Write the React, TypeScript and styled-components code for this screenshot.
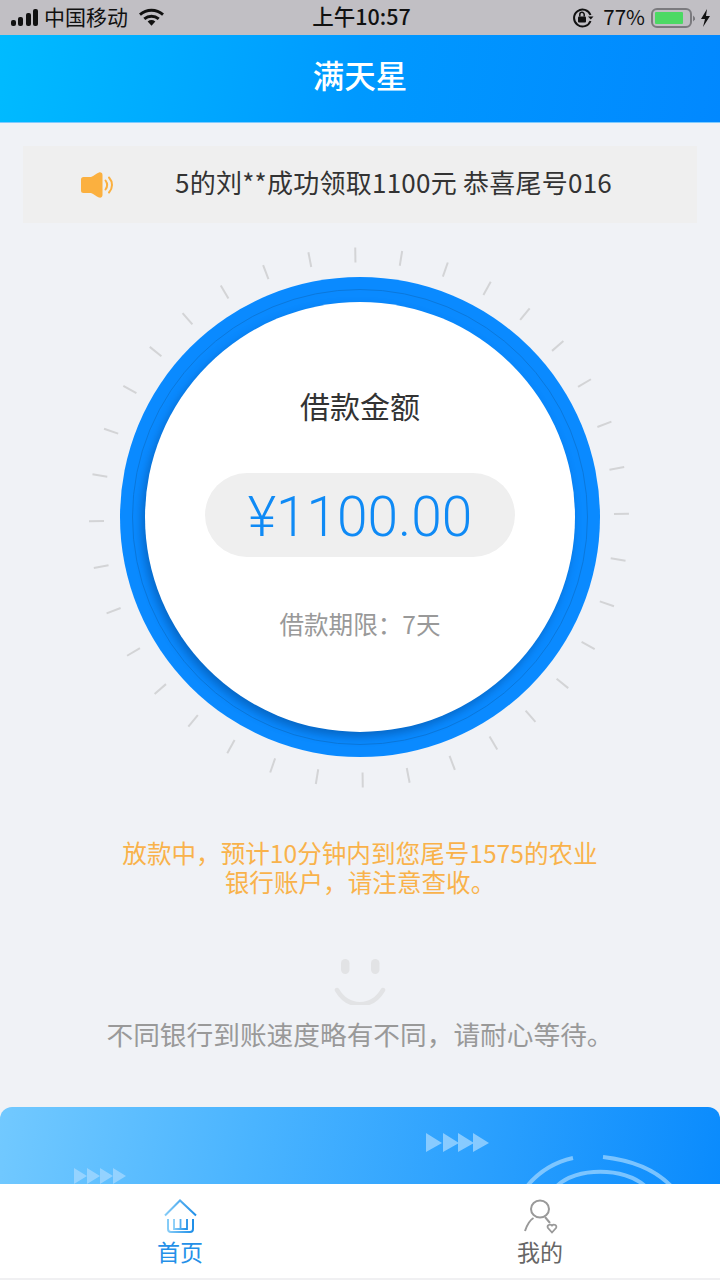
import React from "react";
import styled, { createGlobalStyle } from "styled-components";

const GlobalStyle = createGlobalStyle`
  html, body { margin: 0; padding: 0; background: #f0f2f6; }
  * { box-sizing: border-box; }
`;

const FONT = `"Noto Sans CJK SC", "Noto Sans", sans-serif`;

const Page = styled.div`
  width: 720px;
  height: 1280px;
  display: flex;
  flex-direction: column;
  overflow: hidden;
  background: #f0f2f6;
  font-family: ${FONT};
`;

const StatusBar = styled.div`
  height: 35px;
  flex: none;
  display: grid;
  grid-template-columns: 1fr auto 1fr;
  align-items: center;
  padding: 0 8px 0 11px;
  background: #c1bfc4;
  color: #111;
  font-size: 21px;
  line-height: 30px;
`;
const StatusLeft = styled.div`
  display: flex;
  align-items: center;
  gap: 5px;
`;
const CarrierName = styled.span`
  margin: -4px 6px 0 0;
`;
const StatusRight = styled.div`
  display: flex;
  align-items: center;
  justify-content: flex-end;
`;
const Clock = styled.div`
  margin-top: -4px;
  font-size: 21.500px;
  font-weight: 500;
`;
const Percent = styled.span`
  margin: -4px 6px 0 9px;
  font-size: 20.500px;
`;
const BatteryShell = styled.div`
  width: 41px;
  height: 20px;
  padding: 2px;
  border: 2px solid #7b7a7e;
  border-radius: 6px;
`;
const BatteryFill = styled.div`
  height: 100%;
  background: #4cd964;
  border-radius: 1px;
`;

const Header = styled.header`
  height: 88px;
  flex: none;
  display: flex;
  align-items: center;
  justify-content: center;
  padding-bottom: 10px;
  background: linear-gradient(100deg, #00bbff 0%, #0099ff 50%, #0188ff 100%);
  border-bottom: 1px solid #7fcbff;
  color: #fff;
  font-size: 31.500px;
  font-weight: 500;
`;

const Main = styled.main`
  flex: 1;
  min-height: 0;
  display: flex;
  flex-direction: column;
  align-items: center;
  padding-top: 23px;
`;

const Notice = styled.div`
  width: 674px;
  height: 77px;
  flex: none;
  display: flex;
  align-items: center;
  padding-left: 58px;
  background: #efefef;
  color: #333;
  font-size: 26px;
`;
const NoticeText = styled.span`
  margin-left: 61px;
  padding-bottom: 7px;
  letter-spacing: 0.25px;
  white-space: nowrap;
`;

const Dial = styled.div`
  position: relative;
  width: 544px;
  height: 544px;
  flex: none;
  margin-top: 22px;
  display: flex;
  align-items: center;
  justify-content: center;
`;
const Ticks = styled.svg`
  position: absolute;
  inset: 0;
`;
const Ring = styled.div`
  width: 480px;
  height: 480px;
  display: flex;
  align-items: center;
  justify-content: center;
  border-radius: 50%;
  background: #0a8aff;
`;
const RingLine = styled.div`
  width: 456px;
  height: 456px;
  display: flex;
  align-items: center;
  justify-content: center;
  border-radius: 50%;
  border: 1.500px solid #0b78dc;
`;
const Face = styled.div`
  width: 430px;
  height: 430px;
  display: flex;
  flex-direction: column;
  align-items: center;
  border-radius: 50%;
  background: #fff;
  box-shadow: -3px 5px 10px rgba(0, 50, 110, 0.4);
`;
const FaceTitle = styled.div`
  margin-top: 81px;
  color: #333;
  font-size: 30px;
  line-height: 44px;
`;
const AmountPill = styled.div`
  width: 310px;
  height: 84px;
  margin-top: 46px;
  padding-top: 4px;
  display: flex;
  align-items: center;
  justify-content: center;
  border-radius: 42px;
  background: #efefef;
  color: #0f8af5;
  font-family: Roboto, sans-serif;
  font-size: 55px;
  font-weight: 300;
`;
const FaceTerm = styled.div`
  margin-top: 48px;
  color: #999;
  font-size: 24.600px;
  line-height: 36px;
`;

const Progress = styled.p`
  width: 490px;
  margin: 49px 0 0;
  text-align: center;
  color: #f9b24b;
  font-size: 24.600px;
  line-height: 29px;
`;
const Smile = styled.svg`
  margin-top: 63px;
  flex: none;
`;
const Hint = styled.p`
  margin: 10px 0 0;
  color: #999;
  font-size: 26.700px;
  line-height: 38px;
  white-space: nowrap;
`;
const Banner = styled.div`
  width: 100%;
  height: 77px;
  margin-top: auto;
  flex: none;
  overflow: hidden;
  border-radius: 12px 12px 0 0;
  background: linear-gradient(100deg, #72c9ff 0%, #4ab4ff 35%, #0a8bfd 100%);
`;

const TabBar = styled.nav`
  height: 96px;
  flex: none;
  display: flex;
  background: #fff;
  border-bottom: 2px solid #f0f0f2;
`;
const Tab = styled.div<{ $active?: boolean }>`
  flex: 1;
  display: flex;
  flex-direction: column;
  align-items: center;
  padding-top: 15px;
  color: ${(p) => (p.$active ? "#2490e8" : "#666")};
  font-size: 23px;
  line-height: 30px;
`;
const TabLabel = styled.span`
  margin-top: 1px;
`;

const tickAngles = Array.from({ length: 36 }, (_, i) => i * 10 - 0.8);

const App: React.FC = () => {
  return (
    <Page>
      <GlobalStyle />
      <StatusBar>
        <StatusLeft>
          <svg width="28" height="18" viewBox="0 0 28 18">
            <rect x="0" y="11" width="5" height="6" rx="2" fill="#111" />
            <rect x="7" y="8" width="5" height="9" rx="2" fill="#111" />
            <rect x="15" y="4" width="5" height="13" rx="2" fill="#111" />
            <rect x="22" y="0" width="5" height="17" rx="2" fill="#111" />
          </svg>
          <CarrierName>中国移动</CarrierName>
          <svg width="25" height="20" viewBox="0 0 26 20">
            <path d="M1 6.500C8 .5 18 .5 25 6.500" fill="none" stroke="#111" strokeWidth="3" />
            <path d="M5.500 11C10 7.200 16 7.200 20.500 11" fill="none" stroke="#111" strokeWidth="3" />
            <path d="M9 13.600C11.500 11.600 14.500 11.600 17 13.600L13 18z" fill="#111" />
          </svg>
        </StatusLeft>
        <Clock>上午10:57</Clock>
        <StatusRight>
          <svg width="22" height="20" viewBox="0 0 22 20">
            <path d="M18.500 7A8.500 8.500 0 1 0 18.500 13" fill="none" stroke="#111" strokeWidth="2" />
            <path d="M16 8.500h5.500l-2.700 3z" fill="#111" />
            <rect x="6" y="8.500" width="8" height="6" rx="1" fill="#111" />
            <path d="M7.800 8.500V6.500a2.200 2.200 0 0 1 4.400 0v2" fill="none" stroke="#111" strokeWidth="1.500" />
          </svg>
          <Percent>77%</Percent>
          <BatteryShell>
            <BatteryFill style={{ width: "84%" }} />
          </BatteryShell>
          <svg width="20" height="20" viewBox="0 0 20 20">
            <path d="M1 7.500l2 2v2l-2 2z" fill="#7b7a7e" />
            <path d="M15 1L9 11h4l-2 8 7-11h-4z" fill="#111" />
          </svg>
        </StatusRight>
      </StatusBar>

      <Header>满天星</Header>

      <Main>
        <Notice>
          <svg width="33" height="26" viewBox="0 0 33 26">
            <path
              d="M2.500 5H10C13 4 15 1.500 18 .5 20 0 21.500 1 21.500 3V23C21.500 25 20 26 18 25.500 15 24.500 13 22 10 21H2.500A2.500 2.500 0 0 1 0 18.500V7.500A2.500 2.500 0 0 1 2.500 5z"
              fill="#fbb03f"
            />
            <path d="M24.500 8.500c2.200 3 2.200 6 0 9" fill="none" stroke="#fbb03f" strokeWidth="2" strokeLinecap="round" />
            <path d="M28 5.500c4 4.500 4 10.500 0 15" fill="none" stroke="#fbb03f" strokeWidth="2" strokeLinecap="round" />
          </svg>
          <NoticeText>5的刘**成功领取1100元 恭喜尾号016</NoticeText>
        </Notice>

        <Dial>
          <Ticks width="544" height="544" viewBox="0 0 544 544">
            <g transform="translate(-1 0.5)">
              {tickAngles.map((a) => (
                <line
                  key={a}
                  x1="272"
                  y1="2"
                  x2="272"
                  y2="17"
                  stroke="#d3d4d6"
                  strokeWidth="2"
                  transform={`rotate(${a} 272 272)`}
                />
              ))}
            </g>
          </Ticks>
          <Ring>
            <RingLine>
              <Face>
                <FaceTitle>借款金额</FaceTitle>
                <AmountPill>¥1100.00</AmountPill>
                <FaceTerm>借款期限：7天</FaceTerm>
              </Face>
            </RingLine>
          </Ring>
        </Dial>

        <Progress>放款中，预计10分钟内到您尾号1575的农业银行账户，请注意查收。</Progress>

        <Smile width="52" height="46" viewBox="0 0 52 46">
          <rect x="7" y="0" width="8.500" height="15" rx="4.200" fill="#e2e3e5" />
          <rect x="37" y="0" width="8.500" height="15" rx="4.200" fill="#e2e3e5" />
          <path d="M3 31C14 50 38 50 49 31" fill="none" stroke="#e2e3e5" strokeWidth="4.500" strokeLinecap="round" />
        </Smile>
        <Hint>不同银行到账速度略有不同，请耐心等待。</Hint>

        <Banner>
          <svg width="720" height="77" viewBox="0 0 720 77">
            <g fill="#a5d8ff" fillOpacity="0.75">
              <path d="M426 26l16 10-16 9zM443 26l16 10-16 9zM458 26l16 10-16 9zM473 26l16 10-16 9z" />
              <path d="M74 61l13 8-13 8zM87 61l13 8-13 8zM100 61l13 8-13 8zM113 61l13 8-13 8z" />
            </g>
            <g fill="none" stroke="#a5d8ff" strokeOpacity="0.7" strokeWidth="4">
              <path d="M528 78C540 64 555 55 573 51" />
              <path d="M603 50C630 53 655 62 672 80" />
              <path d="M557 79C575 60 625 60 645 79" />
            </g>
          </svg>
        </Banner>
      </Main>

      <TabBar>
        <Tab $active>
          <svg width="34" height="36" viewBox="0 0 34 36">
            <defs>
              <linearGradient id="homeStroke" x1="0" y1="0" x2="1" y2="0">
                <stop offset="0" stopColor="#86ccf7" />
                <stop offset="1" stopColor="#1f8fe8" />
              </linearGradient>
            </defs>
            <path d="M2 16.500L17 1.500 33 16.500" fill="none" stroke="url(#homeStroke)" strokeWidth="2" />
            <path d="M5 20v10a3 3 0 0 0 3 3h19a3 3 0 0 0 3-3V20" fill="none" stroke="url(#homeStroke)" strokeWidth="2" />
            <path d="M11 20v10h13V20M17.500 20v10" fill="none" stroke="url(#homeStroke)" strokeWidth="1.800" />
          </svg>
          <TabLabel>首页</TabLabel>
        </Tab>
        <Tab>
          <svg width="36" height="36" viewBox="0 0 36 36">
            <ellipse cx="18" cy="10" rx="9" ry="8.500" fill="none" stroke="#999" strokeWidth="2" />
            <path d="M3 32C5 26 8 21 11.500 19M23 18l5 6" fill="none" stroke="#999" strokeWidth="2" />
            <path d="M30 33.500l-4-4.500c-1.500-2.500 2-4.500 4-2.500 2-2 5.500 0 4 2.500z" fill="none" stroke="#999" strokeWidth="1.800" />
          </svg>
          <TabLabel>我的</TabLabel>
        </Tab>
      </TabBar>
    </Page>
  );
};

export default App;
